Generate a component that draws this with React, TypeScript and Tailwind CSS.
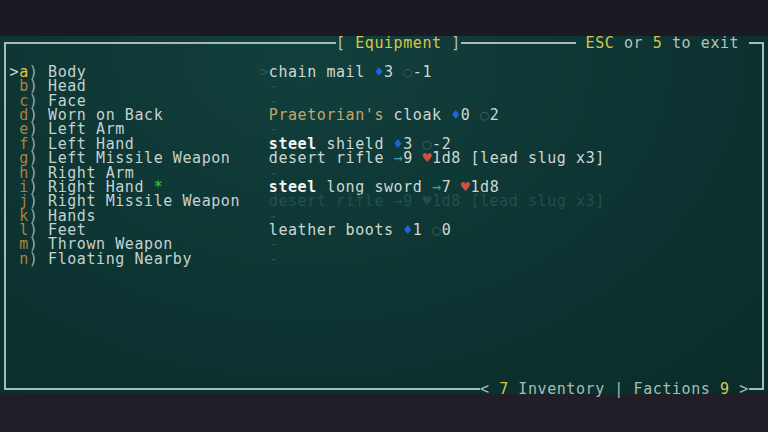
type Seg = [string, string, boolean?];

const DIM = "text-[#2c5955]";
const TXT = "text-[#cdd8d5]";
const DIA = "text-[#2263d8]";
const CIR = "text-[#2f5d58]";
const ARR = "text-[#3aa3ae]";
const HRT = "text-[#d44f37]";

const rows: { key: string; name: string; star?: boolean; item: Seg[] }[] = [
  {
    key: "a",
    name: "Body",
    item: [
      [">", "text-[#2a5652]"],
      ["chain mail ", TXT],
      ["♦", DIA],
      ["3 ", TXT],
      ["○", CIR],
      ["-1", TXT],
    ],
  },
  { key: "b", name: "Head", item: [[" -", DIM]] },
  { key: "c", name: "Face", item: [[" -", DIM]] },
  {
    key: "d",
    name: "Worn on Back",
    item: [
      [" Praetorian's", "text-[#c6a56b]"],
      [" cloak ", TXT],
      ["♦", DIA],
      ["0 ", TXT],
      ["○", CIR],
      ["2", TXT],
    ],
  },
  { key: "e", name: "Left Arm", item: [[" -", DIM]] },
  {
    key: "f",
    name: "Left Hand",
    item: [
      [" steel", "text-[#f2f6f5]", true],
      [" shield ", TXT],
      ["♦", DIA],
      ["3 ", TXT],
      ["○", CIR],
      ["-2", TXT],
    ],
  },
  {
    key: "g",
    name: "Left Missile Weapon",
    item: [
      [" desert rifle ", TXT],
      ["→", ARR],
      ["9 ", TXT],
      ["♥", HRT],
      ["1d8 [lead slug x3]", TXT],
    ],
  },
  { key: "h", name: "Right Arm", item: [[" -", DIM]] },
  {
    key: "i",
    name: "Right Hand",
    star: true,
    item: [
      [" steel", "text-[#f2f6f5]", true],
      [" long sword ", TXT],
      ["→", ARR],
      ["7 ", TXT],
      ["♥", HRT],
      ["1d8", TXT],
    ],
  },
  {
    key: "j",
    name: "Right Missile Weapon",
    item: [[" desert rifle →9 ♥1d8 [lead slug x3]", "text-[#21504b]"]],
  },
  { key: "k", name: "Hands", item: [[" -", DIM]] },
  {
    key: "l",
    name: "Feet",
    item: [
      [" leather boots ", TXT],
      ["♦", DIA],
      ["1 ", TXT],
      ["○", CIR],
      ["0", TXT],
    ],
  },
  { key: "m", name: "Thrown Weapon", item: [[" -", DIM]] },
  { key: "n", name: "Floating Nearby", item: [[" -", DIM]] },
];

function App() {
  return (
    <div className="w-[768px] h-[432px] flex flex-col bg-[#1e1d26] font-['DejaVu_Sans_Mono',monospace] text-[15px] tracking-[0.57px] leading-[14.4px] whitespace-pre overflow-hidden">
      <div className="h-[36px] bg-[#1b1a22]" />
      <div className="relative z-10 bg-[radial-gradient(ellipse_at_40%_5%,#123f3c,#0c3331_60%,#092c2a)] px-[3.8px]">
        {/* top frame line */}
        <div className="flex h-[14.4px]">
          <div className="self-end w-[332.2px] h-[8.2px] border-t-2 border-l-2 border-[#a4bbb7]" />
          <span className="text-[#b3c3c0]">
            [ <span className="text-[#d8c54b]">Equipment</span> ]
          </span>
          <div className="self-end flex-1 h-[8.2px] border-t-2 border-[#a4bbb7]" />
          <span className="text-[#b3c3c0]">
            {" "}
            <span className="text-[#d8c54b]">ESC</span> or{" "}
            <span className="text-[#d8c54b]">5</span> to exit{" "}
          </span>
          <div className="self-end w-[15.4px] h-[8.2px] border-t-2 border-r-2 border-[#a4bbb7]" />
        </div>

        <div className="h-[331.2px] border-x-2 border-[#a4bbb7] pl-[3.8px] pt-[14.4px]">
          {rows.map((r) => (
            <div key={r.key} className="flex h-[14.4px]">
              <div className="w-[249.6px] shrink-0">
                <span className="text-[#cfd8d6]">{r.key === "a" ? ">" : " "}</span>
                <span className={r.key === "a" ? "text-[#e6c43a]" : "text-[#b0803f]"}>{r.key}</span>
                <span className="text-[#98aeab]">)</span>
                <span className="text-[#c5d2cf]"> {r.name}</span>
                {r.star && <span className="text-[#38cc48]"> *</span>}
              </div>
              <div>
                {r.item.map((s, i) => (
                  <span key={i} className={s[2] ? s[1] + " font-bold" : s[1]}>
                    {s[0]}
                  </span>
                ))}
              </div>
            </div>
          ))}
        </div>

        {/* bottom frame line */}
        <div className="flex h-[12px]">
          <div className="self-start flex-1 h-[8.2px] border-b-2 border-l-2 border-[#a4bbb7]" />
          <span className="text-[#a9bbb8]">
            {"< "}
            <span className="text-[#d8c54b]">7</span> Inventory | Factions{" "}
            <span className="text-[#d8c54b]">9</span>
            {" >"}
          </span>
          <div className="self-start w-[15.4px] h-[8.2px] border-b-2 border-r-2 border-[#a4bbb7]" />
        </div>
      </div>
      <div className="flex-1 bg-[#201f28]" />
    </div>
  );
}

export default App;
